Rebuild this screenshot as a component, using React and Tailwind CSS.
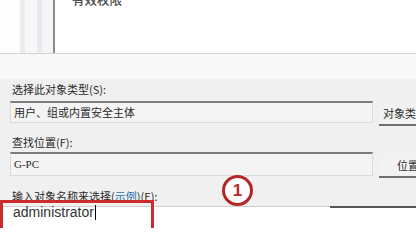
export default function App() {
  const cjk = { fontFamily: '"Noto Sans CJK SC", "Noto Sans", sans-serif' };
  return (
    <div className="relative w-[416px] h-[228px] overflow-hidden bg-[#f0f0f0] text-[#2a2a2a]" style={cjk}>
      {/* permissions panel (cut off at top) */}
      <div className="flex h-[54px] bg-white border-b border-[#d4d4d4]">
        <div className="flex w-[55px] border-r-2 border-[#8a8a8a] bg-[#fafafa]">
          <div className="w-[20px] bg-[#fdfdfd]" />
          <div className="w-[5px] bg-[#ececf0]" />
          <div className="w-[12px] bg-[#f7f7f9]" />
          <div className="w-[5px] bg-[#eaeaee]" />
          <div className="flex-1 bg-[#f5f5f7]" />
        </div>
        <div className="flex-1 pl-[17px]">
          <div className="-mt-[8px] text-[12.5px] leading-[16px] font-medium text-[#444]">有效权限</div>
        </div>
      </div>
      <div className="h-[25px] bg-[#f8f8f8]" />

      {/* select users dialog */}
      <div className="pl-[10px]">
        <div className="h-[20px] pl-[2px] text-[11px] leading-[20px]">选择此对象类型(S):</div>
        <div className="mt-[2px] flex gap-[6px]">
          <div className="h-[22px] w-[363px] shrink-0 border border-[#dadada] border-t-2 border-t-[#7c7c7c] bg-[#f4f4f4] pl-[3px] text-[11px] leading-[18px]">
            用户、组或内置安全主体
          </div>
          <div className="mt-[2px] h-[23px] w-[60px] shrink-0 border-b-2 border-[#707070] bg-[#f2f2f2] pl-[4px] text-[11px] leading-[20px]">
            对象类型
          </div>
        </div>

        <div className="mt-[6px] h-[20px] pl-[2px] text-[11px] leading-[20px]">查找位置(F):</div>
        <div className="flex gap-[6px]">
          <div className="h-[24px] w-[363px] shrink-0 border border-[#dadada] border-t-2 border-t-[#7c7c7c] bg-[#f4f4f4] pl-[3px] text-[11px] leading-[20px]" style={{ fontFamily: '"Liberation Serif", serif' }}>
            G-PC
          </div>
          <div className="mt-[2px] h-[24px] w-[60px] shrink-0 border-b-2 border-[#707070] bg-[#f2f2f2] pl-[18px] text-[11px] leading-[22px]">
            位置
          </div>
        </div>

        <div className="mt-[8px] h-[20px] pl-[2px] text-[11px] leading-[20px]">
          输入对象名称来选择(<span className="text-[#2a6db5] underline">示例</span>)(E):
        </div>
      </div>
      <div className="flex h-[40px] border-t border-[#cfcfcf] bg-white">
        <div className="flex-1" />
        <div className="w-[86px] border-t-2 border-[#555] -mt-px" />
      </div>

      {/* input text */}
      <div className="absolute left-[13px] top-[204px] flex items-center text-[14px] leading-[16px] text-[#333]" style={{ fontFamily: '"Liberation Sans", Arial, sans-serif' }}>
        administrator
        <span className="ml-px h-[15px] w-px bg-black" />
      </div>

      {/* annotations */}
      <div className="absolute left-0 top-[200px] h-[32px] w-[154px] border-[3px] border-[#cc2c2c]" />
      <div className="absolute left-[222px] top-[175px] flex h-[31px] w-[31px] items-center justify-center rounded-full border-[3px] border-[#b52727] bg-white text-[17px] font-bold text-[#b52727]" style={{ fontFamily: '"Liberation Sans", Arial, sans-serif' }}>
        1
      </div>
    </div>
  );
}
